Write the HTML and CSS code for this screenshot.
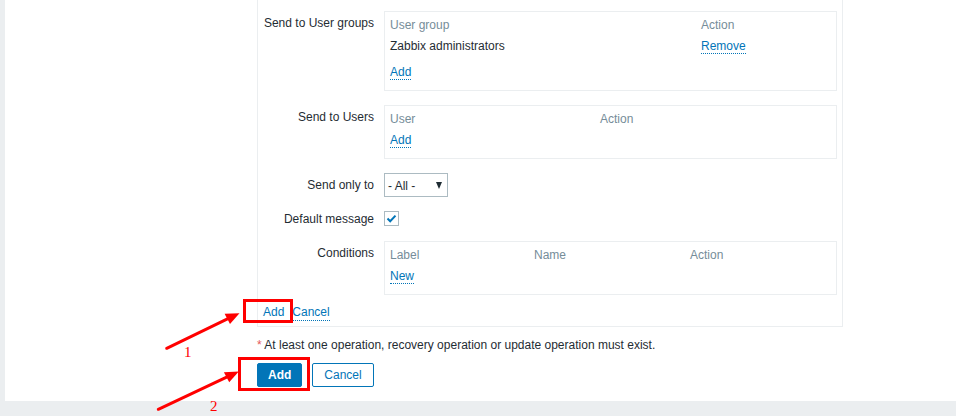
FILE: index.html
```html
<!DOCTYPE html>
<html>
<head>
<meta charset="utf-8">
<link rel="stylesheet" href="styles.css">
</head>
<body>
<div class="panel">
  <div class="op-box">
    <div class="row">
      <div class="lbl">Send to User groups</div>
      <div class="tbox">
        <div class="tbl cols-groups">
          <div class="th">User group</div><div class="th">Action</div>
          <div class="td">Zabbix administrators</div><div class="td"><span class="link">Remove</span></div>
        </div>
        <div class="tfoot tfoot-wide"><span class="link">Add</span></div>
      </div>
    </div>
    <div class="row">
      <div class="lbl">Send to Users</div>
      <div class="tbox">
        <div class="tbl cols-users">
          <div class="th">User</div><div class="th">Action</div>
        </div>
        <div class="tfoot"><span class="link">Add</span></div>
      </div>
    </div>
    <div class="row">
      <div class="lbl">Send only to</div>
      <div class="field">
        <div class="select"><span>- All -</span><span class="caret"></span></div>
      </div>
    </div>
    <div class="row row-check">
      <div class="lbl lbl-check">Default message</div>
      <div class="field">
        <div class="checkbox">
          <svg width="13" height="13" viewBox="0 0 13 13"><polyline points="2.5,6.5 5.2,9.2 10.5,3.6" fill="none" stroke="#0275b8" stroke-width="2"/></svg>
        </div>
      </div>
    </div>
    <div class="row row-last">
      <div class="lbl">Conditions</div>
      <div class="tbox">
        <div class="tbl cols-cond">
          <div class="th">Label</div><div class="th">Name</div><div class="th">Action</div>
        </div>
        <div class="tfoot"><span class="link">New</span></div>
      </div>
    </div>
    <div class="links"><span class="link">Add</span><span class="link">Cancel</span></div>
  </div>
  <div class="note"><span class="req">*</span> At least one operation, recovery operation or update operation must exist.</div>
  <div class="buttons">
    <button class="btn btn-primary">Add</button>
    <button class="btn btn-alt">Cancel</button>
  </div>
</div>

<div class="annot">
  <svg class="arrows" width="956" height="416" viewBox="0 0 956 416">
    <line x1="166.7" y1="348.3" x2="228" y2="318.7" stroke="#ff0000" stroke-width="3" stroke-linecap="round"/>
    <polygon points="239.5,313.2 230,324 224.6,313.8" fill="#ff0000"/>
    <line x1="158.3" y1="409.3" x2="227.2" y2="376.9" stroke="#ff0000" stroke-width="3" stroke-linecap="round"/>
    <polygon points="238.8,371.5 229.2,382.2 223.9,372.2" fill="#ff0000"/>
  </svg>
  <div class="mark mark-1"></div>
  <div class="mark mark-2"></div>
  <span class="num num-1">1</span>
  <span class="num num-2">2</span>
</div>
</body>
</html>
```
FILE: styles.css
```css
html, body {
  margin: 0;
  padding: 0;
}
body {
  background: #ebeef0;
  font-family: "Liberation Sans", Arial, sans-serif;
  font-size: 12px;
  color: #1f2c33;
  position: relative;
  width: 956px;
  height: 416px;
  overflow: hidden;
}
.panel {
  margin-left: 5px;
  height: 401px;
  background: #ffffff;
  overflow: hidden;
}
.op-box {
  margin-left: 252px;
  width: 579px;
  padding: 11px 5px 5px 0;
  border: 1px solid #ebeef0;
  border-top: none;
}
.row {
  display: grid;
  grid-template-columns: 116px 453px;
  column-gap: 10px;
  margin-bottom: 14px;
}
.row-last {
  margin-bottom: 9px;
}
.lbl {
  text-align: right;
  padding-top: 5px;
  line-height: 15px;
}
.row-check {
  min-height: 16px;
}
.lbl-check {
  padding-top: 1px;
  line-height: 15px;
}
.tbox {
  border: 1px solid #ebeef0;
  padding: 2px 5px 8px;
}
.tbl {
  display: grid;
}
.cols-groups { grid-template-columns: 311px 1fr; }
.cols-users { grid-template-columns: 210px 1fr; }
.cols-cond { grid-template-columns: 144px 156px 1fr; }
.th, .td {
  padding: 4px 0 2px;
  line-height: 15px;
}
.th {
  color: #768d99;
}
.tfoot {
  padding: 4px 0 2px;
  line-height: 15px;
}
.tfoot-wide {
  padding-top: 9px;
}
.link {
  color: #0275b8;
  border-bottom: 1px dotted #0275b8;
}
.field {
  display: flex;
  align-items: flex-start;
}
.select {
  box-sizing: border-box;
  width: 64px;
  height: 24px;
  border: 1px solid #acbbc2;
  display: flex;
  align-items: center;
  justify-content: space-between;
  padding: 1px 5px 0 3px;
  color: #1f2c33;
}
.caret {
  width: 0;
  height: 0;
  border-left: 3.5px solid transparent;
  border-right: 3.5px solid transparent;
  border-top: 7px solid #1f2c33;
}
.checkbox {
  box-sizing: border-box;
  width: 15px;
  height: 15px;
  border: 1px solid #acbbc2;
  display: flex;
  align-items: center;
  justify-content: center;
}
.checkbox svg {
  display: block;
}
.links {
  display: flex;
  gap: 8px;
  padding: 1px 0 0 5px;
  line-height: 15px;
}
.note {
  margin: 11px 0 0 252px;
  line-height: 15px;
}
.req {
  color: #e45959;
}
.buttons {
  margin: 10px 0 0 252px;
  display: flex;
  gap: 10px;
}
.btn {
  height: 24px;
  font-family: "Liberation Sans", Arial, sans-serif;
  font-size: 12px;
  border-radius: 2px;
  margin: 0;
  line-height: 22px;
  cursor: pointer;
}
.btn-primary {
  background: #0275b8;
  border: 1px solid #0275b8;
  color: #ffffff;
  font-weight: bold;
  padding: 0 10px;
}
.btn-alt {
  background: #ffffff;
  border: 1px solid #0275b8;
  color: #0275b8;
  padding: 0 11px;
}
.annot {
  position: absolute;
  left: 0;
  top: 0;
  width: 956px;
  height: 416px;
  pointer-events: none;
}
.arrows {
  position: absolute;
  left: 0;
  top: 0;
}
.mark {
  position: absolute;
  box-sizing: border-box;
  border: 3px solid #ff0000;
}
.mark-1 {
  left: 243px;
  top: 299px;
  width: 50px;
  height: 24px;
}
.mark-2 {
  left: 238px;
  top: 357px;
  width: 72px;
  height: 34px;
}
.num {
  position: absolute;
  font-family: "Liberation Serif", "Times New Roman", serif;
  font-size: 15px;
  line-height: 15px;
  color: #ff0000;
}
.num-1 {
  left: 184px;
  top: 345px;
}
.num-2 {
  left: 210px;
  top: 399px;
}
```
